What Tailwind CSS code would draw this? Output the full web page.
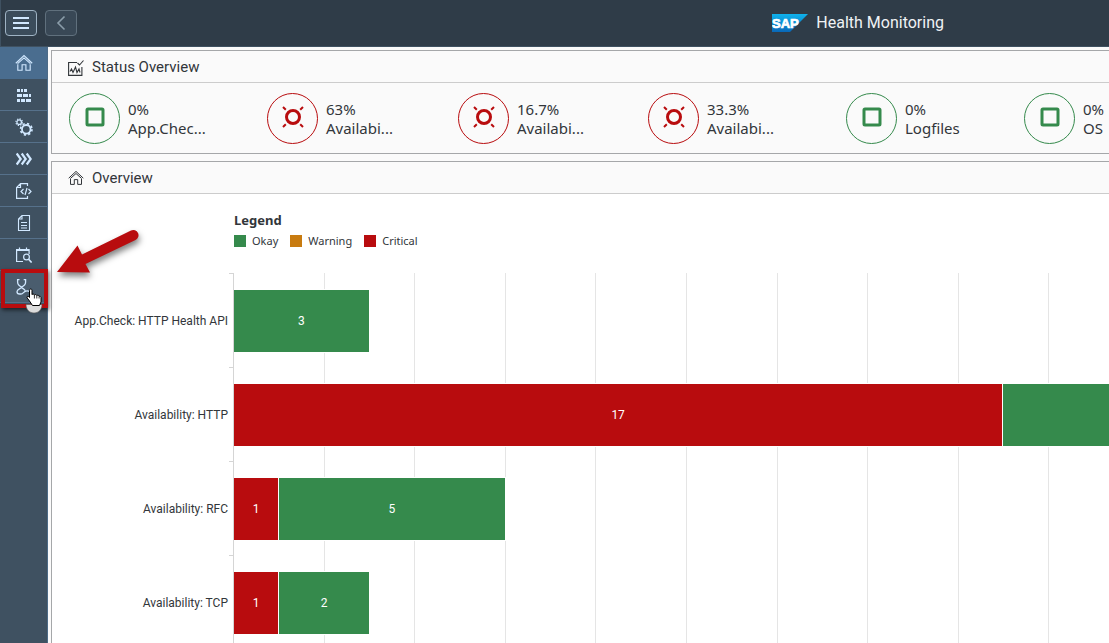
<!DOCTYPE html>
<html lang="en">
<head>
<meta charset="utf-8">
<meta name="viewport" content="width=device-width, initial-scale=1">
<title>Health Monitoring</title>
<script src="https://cdn.jsdelivr.net/npm/@tailwindcss/browser@4"></script>
</head>
<body class="flex h-screen flex-col overflow-hidden bg-[#fafafa] font-['Noto_Sans','Liberation_Sans',sans-serif] text-[15px] text-[#32363a]">
<svg class="hidden">
  <symbol id="home" viewBox="0 0 16 16"><path d="M.7 8.2 8 1.400l7.300 6.800M2.500 9v5.400h3.800V9.600h3.400v4.800h3.800V9M2.300 8.600 8 3.500l5.700 5.100" fill="none" stroke="currentColor" stroke-width="1"/></symbol>
  <symbol id="okay" viewBox="0 0 24 24"><rect x="4" y="4" width="16" height="16" rx="1" fill="none" stroke="currentColor" stroke-width="3"/></symbol>
  <symbol id="critical" viewBox="0 0 24 24"><g fill="none" stroke="currentColor"><circle cx="12" cy="12" r="6.500" stroke-width="3"/><path d="m2 2 2.800 2.800M22 2l-2.800 2.800M2 22l2.800-2.800M22 22l-2.800-2.800" stroke-width="2"/></g></symbol>
</svg>
<header class="flex h-[47px] shrink-0 items-center border-b border-l border-b-[#3f5161] border-l-[#3f5161] bg-[#2f3c48] pl-1">
  <div class="flex flex-1 gap-2">
    <button aria-label="Menu" class="flex h-[26px] w-8 items-center justify-center rounded border border-[#9fb3c4] bg-[#3b4c5b] text-[#d1e8ff]">
      <svg width="16" height="14" viewBox="0 0 16 14"><path d="M0 2h16M0 7h16M0 12h16" stroke="currentColor" stroke-width="2"/></svg>
    </button>
    <button aria-label="Back" class="flex h-[26px] w-8 items-center justify-center rounded border border-[#60707d] bg-[#394856] text-[#8b9daa]">
      <svg width="16" height="16" viewBox="0 0 16 16"><path d="M11.500 1.500 5 8l6.500 6.500" fill="none" stroke="currentColor" stroke-width="1.600"/></svg>
    </button>
  </div>
  <div class="flex items-center gap-2">
    <svg width="36" height="18" viewBox="0 0 36 18" role="img" aria-label="SAP">
      <defs><linearGradient id="sap" x2="0" y2="1"><stop stop-color="#0fb2ec"/><stop offset="1" stop-color="#0968b8"/></linearGradient></defs>
      <path d="M0 0h36L18 18H0z" fill="url(#sap)"/>
      <text x="0" y="14" fill="#fff" font-family="Liberation Sans, sans-serif" font-size="13" font-weight="700" stroke="#fff" stroke-width=".7">SAP</text>
    </svg>
    <h1 class="font-[Roboto,sans-serif] text-base text-[#f0f3f5]">Health Monitoring</h1>
  </div>
  <div class="w-[165px] shrink-0"></div>
</header>
<div class="flex min-h-0 flex-1">
  <nav aria-label="Main" class="relative w-12 shrink-0 border-r border-[#4d6b87] bg-[#3f5161] text-[#d1e8ff]">
    <a href="#" aria-label="Home" class="flex h-8 items-center justify-center border-b border-[#4a6d8f] bg-[#4a6d8f]"><svg width="18" height="18"><use href="#home"/></svg></a>
    <a href="#" aria-label="Status" class="flex h-8 items-center justify-center border-b border-[#56718b]"><svg width="16" height="16" viewBox="0 0 16 16" fill="currentColor"><path d="M1 2h3v3H1zM5 2h2v3H5zM8 2h3v3H8zM1 7h5v3H1zM7 7h5v3H7zM13 7h2v3h-2zM1 12h3v3H1zM5 12h4v3H5zM10 12h5v3h-5z"/></svg></a>
    <a href="#" aria-label="Settings" class="flex h-8 items-center justify-center border-b border-[#56718b]"><svg width="18" height="18" viewBox="0 0 16 16" fill="none" stroke="currentColor"><circle cx="10" cy="10" r="3.800" stroke-width="1.600"/><circle cx="10" cy="10" r="5.100" stroke-width="1.500" stroke-dasharray="2 2.005"/><circle cx="3.700" cy="3.700" r="2" stroke-width="1.100"/><circle cx="3.700" cy="3.700" r="2.900" stroke-width="1.100" stroke-dasharray="1.140 1.138"/></svg></a>
    <a href="#" aria-label="Process" class="flex h-8 items-center justify-center border-b border-[#56718b]"><svg width="16" height="16" viewBox="0 0 16 16" fill="none" stroke="currentColor" stroke-width="2.200"><path d="m.7 2.500 4 5.500-4 5.500M5.700 2.500l4 5.500-4 5.500M10.700 2.500l4 5.500-4 5.500"/></svg></a>
    <a href="#" aria-label="Source" class="flex h-8 items-center justify-center border-b border-[#56718b]"><svg width="16" height="16" viewBox="0 0 16 16" fill="none" stroke="currentColor" stroke-width="1.200"><path d="M11.500 3V.6H4.500L.6 4.500v10.900h10.900V13M.6 4.500h3.900V.6M7.500 6 5 8.500 7.500 11M12.500 6 15 8.500 12.500 11M11 5 9 12"/></svg></a>
    <a href="#" aria-label="Documents" class="flex h-8 items-center justify-center border-b border-[#56718b]"><svg width="16" height="16" viewBox="0 0 16 16" fill="none" stroke="currentColor" stroke-width="1.100"><path d="M6 .5h7.500v15h-11V4zM6 .5V4H2.500M5 7.500h6M5 10.500h6M5 13h6"/></svg></a>
    <a href="#" aria-label="Search calendar" class="flex h-8 items-center justify-center border-b border-[#56718b]"><svg width="16" height="16" viewBox="0 0 16 16" fill="none" stroke="currentColor" stroke-width="1.200"><path d="M7 14.500H.6V2.500h12.500V7M.6 3.500h12.500M3.500.5v3M10.500.5v3"/><circle cx="10.500" cy="10" r="2.900"/><path d="m12.600 12.200 3 3.300" stroke-width="1.600"/></svg></a>
    <a href="#" aria-label="Diagnosis" class="flex h-8 items-center justify-center border-b border-[#56718b] bg-[#4a5d6e]"><svg width="16" height="18" viewBox="0 0 16 18" fill="none" stroke="currentColor" stroke-width="1.300"><path d="M3.500 1.600H1.600v2.400c0 2.800 1.400 4 4 5 2.600-1 4-2.200 4-5V1.600H7.700M5.600 9c0 1.800-4.600 1.600-4.600 4.800 0 1.400 1 2.200 2.500 2.200h1.500c2.500 0 2.500-3.200 6-3.200 2.500 0 3.500.7 3.500 2.700M5.600 9c0 1.600 3 1.600 3.500 3.600"/></svg></a>
    <div class="absolute top-[222px] left-px h-[39px] w-[47px] border-4 border-[#b80c0e] shadow-[1px_2px_4px_rgba(0,0,0,.6)]"></div>
    <svg class="absolute top-[241px] left-[25px]" width="20" height="26" viewBox="0 0 20 26" aria-hidden="true">
      <path d="M1 16.500h16c0 5-3.500 8.500-8 8.500s-8-3.500-8-8.500z" fill="#dcdcdc" stroke="#555" stroke-width=".6"/>
      <path d="M4.500 2.500c0-2 2.500-2 2.500 0v4.200c.6-1 2.200-.7 2.400.3.600-.8 2.200-.5 2.400.6.700-.7 2.200-.3 2.300.8.900-.4 1.900.2 1.900 1.200V14l-1.500 3.500h-7L4.500 13l-2.300-3c-.8-1.200.6-2.300 1.500-1.400l.8.900z" fill="#fff" stroke="#000" stroke-width="1"/>
      <path d="M9.400 7v3.500M11.800 7.800v2.700M14.100 8.500v2" stroke="#000" stroke-width=".8"/>
    </svg>
    <svg class="pointer-events-none absolute top-[180px] left-[54px] z-10 drop-shadow-[1px_4px_3px_rgba(0,0,0,.5)]" width="88" height="50" viewBox="0 0 88 50" aria-hidden="true">
      <path d="M3 45 23.500 18.500 28 27.500 77 3.500a5 5 0 0 1 4.500 9.500L31.500 37 36 45.500z" fill="#b80c0e"/>
    </svg>
  </nav>
  <main class="flex min-w-0 flex-1 flex-col gap-[7px] overflow-hidden pt-[3px] pl-[3px]">
    <section class="h-[104px] shrink-0 border border-r-0 border-[#a5a7a9] bg-[#fafafa]">
      <header class="flex h-8 items-center gap-2 border-b border-[#cccccc] pl-4">
        <svg class="mt-0.5" width="16" height="16" viewBox="0 0 16 16" fill="none" stroke="currentColor" stroke-width="1.100"><path d="M9 2.500H.6v12.900h13.300V7M2 11.500 3.500 9 5 12.500 7.500 7 9 12.500l2-3.500 1 3.500M9.500 3l2 2 4-4.500"/></svg>
        <h2 class="pt-0.5 font-[Roboto,sans-serif]">Status Overview</h2>
      </header>
      <ul class="grid h-[70px] grid-cols-[198px_191px_190px_198px_178px_178px] items-center pl-[17px] leading-[19px]">
        <li class="flex items-center gap-2"><span class="flex size-[51px] items-center justify-center rounded-full border border-[#358a4c] text-[#358a4c]"><svg class="mb-0.5" width="24" height="24"><use href="#okay"/></svg></span><p class="pt-0.5">0%<br>App.Chec...</p></li>
        <li class="flex items-center gap-2"><span class="flex size-[51px] items-center justify-center rounded-full border border-[#b80c0e] text-[#b80c0e]"><svg class="mb-0.5" width="24" height="24"><use href="#critical"/></svg></span><p class="pt-0.5">63%<br>Availabi...</p></li>
        <li class="flex items-center gap-2"><span class="flex size-[51px] items-center justify-center rounded-full border border-[#b80c0e] text-[#b80c0e]"><svg class="mb-0.5" width="24" height="24"><use href="#critical"/></svg></span><p class="pt-0.5">16.7%<br>Availabi...</p></li>
        <li class="flex items-center gap-2"><span class="flex size-[51px] items-center justify-center rounded-full border border-[#b80c0e] text-[#b80c0e]"><svg class="mb-0.5" width="24" height="24"><use href="#critical"/></svg></span><p class="pt-0.5">33.3%<br>Availabi...</p></li>
        <li class="flex items-center gap-2"><span class="flex size-[51px] items-center justify-center rounded-full border border-[#358a4c] text-[#358a4c]"><svg class="mb-0.5" width="24" height="24"><use href="#okay"/></svg></span><p class="pt-0.5">0%<br>Logfiles</p></li>
        <li class="flex items-center gap-2"><span class="flex size-[51px] items-center justify-center rounded-full border border-[#358a4c] text-[#358a4c]"><svg class="mb-0.5" width="24" height="24"><use href="#okay"/></svg></span><p class="pt-0.5">0%<br>OS</p></li>
      </ul>
    </section>
    <section class="flex min-h-0 flex-1 flex-col border-t border-l border-[#a5a7a9] bg-white">
      <header class="flex h-8 shrink-0 items-center gap-2 border-b border-[#cccccc] bg-[#fafafa] pl-4">
        <svg width="16" height="16"><use href="#home"/></svg>
        <h2 class="pt-0.5 font-[Roboto,sans-serif]">Overview</h2>
      </header>
      <div class="flex flex-col pt-4 pl-[182px]">
        <h3 class="text-[13px] leading-5 font-bold">Legend</h3>
        <ul class="flex gap-3 text-[11px] leading-[22px]">
          <li class="flex items-center gap-1.5"><span class="size-3 bg-[#358a4c]"></span>Okay</li>
          <li class="flex items-center gap-1.5"><span class="size-3 bg-[#c87b10]"></span>Warning</li>
          <li class="flex items-center gap-1.5"><span class="size-3 bg-[#b80c0e]"></span>Critical</li>
        </ul>
      </div>
      <div class="mt-[21px] flex min-h-0 flex-1 overflow-hidden font-[Roboto,sans-serif] text-xs">
        <div class="w-[176px] shrink-0 pt-px text-right">
          <div class="flex h-[94px] items-center justify-end">App.Check: HTTP Health API</div>
          <div class="flex h-[94px] items-center justify-end">Availability: HTTP</div>
          <div class="flex h-[94px] items-center justify-end">Availability: RFC</div>
          <div class="flex h-[94px] items-center justify-end">Availability: TCP</div>
        </div>
        <div class="ml-px w-1 shrink-0">
          <div class="h-[94px] border-t border-[#d5d5d5]"></div>
          <div class="h-[94px] border-t border-[#d5d5d5]"></div>
          <div class="h-[94px] border-t border-[#d5d5d5]"></div>
          <div class="h-[94px] border-t border-[#d5d5d5]"></div>
        </div>
        <div class="relative w-[906px] shrink-0 text-white">
          <div class="absolute inset-0 flex border-l border-[#d5d5d5]" aria-hidden="true">
            <div class="flex-1 border-r border-[#e5e5e5]"></div><div class="flex-1 border-r border-[#e5e5e5]"></div><div class="flex-1 border-r border-[#e5e5e5]"></div><div class="flex-1 border-r border-[#e5e5e5]"></div><div class="flex-1 border-r border-[#e5e5e5]"></div><div class="flex-1 border-r border-[#e5e5e5]"></div><div class="flex-1 border-r border-[#e5e5e5]"></div><div class="flex-1 border-r border-[#e5e5e5]"></div><div class="flex-1 border-r border-[#e5e5e5]"></div><div class="flex-1"></div>
          </div>
          <div class="relative pt-px pl-px">
            <div class="flex h-[94px] items-center">
              <div class="flex h-16 shrink-0 items-center justify-center border-y border-r border-white bg-[#358a4c]" style="width:15%">3</div>
            </div>
            <div class="flex h-[94px] items-center">
              <div class="flex h-16 shrink-0 items-center justify-center border-y border-r border-white bg-[#b80c0e]" style="width:85%">17</div>
              <div class="h-16 shrink-0 border-y border-white bg-[#358a4c]" style="width:50%"></div>
            </div>
            <div class="flex h-[94px] items-center">
              <div class="flex h-16 shrink-0 items-center justify-center border-y border-r border-white bg-[#b80c0e]" style="width:5%">1</div>
              <div class="flex h-16 shrink-0 items-center justify-center border-y border-r border-white bg-[#358a4c]" style="width:25%">5</div>
            </div>
            <div class="flex h-[94px] items-center">
              <div class="flex h-16 shrink-0 items-center justify-center border-y border-r border-white bg-[#b80c0e]" style="width:5%">1</div>
              <div class="flex h-16 shrink-0 items-center justify-center border-y border-r border-white bg-[#358a4c]" style="width:10%">2</div>
            </div>
          </div>
        </div>
      </div>
    </section>
  </main>
</div>
</body>
</html>
